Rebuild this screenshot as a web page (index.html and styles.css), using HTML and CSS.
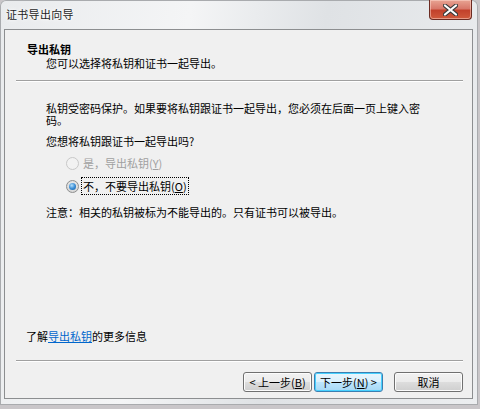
FILE: index.html
```html
<!DOCTYPE html>
<html lang="zh-CN">
<head>
    <meta charset="UTF-8">
    <title>证书导出向导</title>
    <link rel="stylesheet" href="styles.css">
</head>
<body>
    <div class="window">
        <!-- Title bar -->
        <div class="titlebar">
            <span class="title">证书导出向导</span>
            <div class="close-btn">
                <svg width="15" height="12" viewBox="0 0 15 12">
                    <path d="M2 1.5 L13 10.5 M13 1.5 L2 10.5" stroke="#3a3a3a" stroke-width="4.2" stroke-linecap="round"/>
                    <path d="M2 1.5 L13 10.5 M13 1.5 L2 10.5" stroke="#ffffff" stroke-width="2.2" stroke-linecap="round"/>
                </svg>
            </div>
        </div>

        <div class="client">
            <!-- Header -->
            <div class="header">
                <div class="header-title">导出私钥</div>
                <div class="header-sub">您可以选择将私钥和证书一起导出。</div>
            </div>
            <div class="rule"></div>

            <!-- Page body -->
            <div class="content">
                <p class="para">私钥受密码保护。如果要将私钥跟证书一起导出，您必须在后面一页上键入密码。</p>
                <p class="question">您想将私钥跟证书一起导出吗?</p>

                <div class="options">
                    <div class="option disabled">
                        <span class="radio"></span>
                        <span class="option-label">是，导出私钥(<u>Y</u>)</span>
                    </div>
                    <div class="option">
                        <span class="radio checked"></span>
                        <span class="option-label focus">不，不要导出私钥(<u>O</u>)</span>
                    </div>
                </div>

                <p class="note">注意：相关的私钥被标为不能导出的。只有证书可以被导出。</p>
            </div>

            <p class="learn">了解<a href="#" class="link">导出私钥</a>的更多信息</p>
            <div class="rule"></div>

            <!-- Buttons -->
            <div class="buttons">
                <button class="btn">&lt; 上一步(<u>B</u>)</button>
                <button class="btn default">下一步(<u>N</u>) &gt;</button>
                <button class="btn cancel">取消</button>
            </div>
        </div>
    </div>
</body>
</html>
```
FILE: styles.css
```css
* {
    margin: 0;
    padding: 0;
    box-sizing: border-box;
}

body {
    width: 480px;
    height: 409px;
    background-color: #c9c6c9;
    font-family: "Noto Sans CJK SC", "Noto Sans", sans-serif;
    font-size: 11px;
    color: #000000;
    overflow: hidden;
}

/* Window frame */
.window {
    width: 478px;
    height: 405px;
    display: flex;
    flex-direction: column;
    padding: 0 5px 6px 4px;
    border-radius: 6px 6px 0 0;
    background: linear-gradient(100deg, #e9ebed 0%, #f4f5f6 35%, #dfe2e5 60%, #eceef0 100%);
    box-shadow: inset 0 0 0 1px #a9abae;
}

.titlebar {
    height: 29px;
    display: flex;
    justify-content: space-between;
    align-items: flex-start;
}

.title {
    padding: 7px 0 0 2px;
    line-height: 14px;
    letter-spacing: 0.3px;
    color: #1e1e1e;
    text-shadow: 0 0 6px #ffffff, 0 0 3px #ffffff;
}

.close-btn {
    width: 43px;
    height: 20px;
    margin-right: 1px;
    display: flex;
    justify-content: center;
    align-items: center;
    border: 1px solid #6b2b22;
    border-top: none;
    border-radius: 0 0 4px 4px;
    background: linear-gradient(#e8a493 0%, #d8786a 45%, #c2412b 55%, #cf5a3c 100%);
    box-shadow: inset 0 0 0 1px rgba(255, 220, 210, 0.5);
}

/* Client area */
.client {
    flex: 1;
    display: flex;
    flex-direction: column;
    border: 1px solid #8c8e90;
    background-color: #f0f0f0;
}

.header {
    padding: 12px 0 0 22px;
    line-height: 14px;
}

.header-title {
    font-weight: bold;
}

.header-sub {
    padding-left: 19px;
}

.rule {
    margin: 10px 9px 0 11px;
    border-top: 1px solid #a0a0a0;
    border-bottom: 1px solid #ffffff;
}

.content {
    flex: 1;
    padding-left: 41px;
    line-height: 12px;
}

.para {
    width: 390px;
    margin-top: 20px;
}

.question {
    margin-top: 9px;
}

.options {
    margin-top: 7px;
    padding-left: 20px;
    display: flex;
    flex-direction: column;
    gap: 5px;
}

.option {
    height: 18px;
    display: flex;
    align-items: center;
    gap: 2px;
}

.option.disabled {
    color: #a0a0a0;
}

.option-label {
    padding: 2px 1px;
    border: 1px solid transparent;
}

.option-label.focus {
    border: 1px dotted #000000;
}

/* Radio buttons */
.radio {
    width: 13px;
    height: 13px;
    border-radius: 50%;
    border: 1px solid #8e8f8f;
    background: radial-gradient(circle at 50% 40%, #f4f4f4 0%, #d8d8d8 70%, #c8c8c8 100%);
    display: flex;
    justify-content: center;
    align-items: center;
}

.disabled .radio {
    border-color: #c8c8c8;
    background: #f2f2f2;
}

.radio.checked::after {
    content: "";
    width: 7px;
    height: 7px;
    border-radius: 50%;
    background: radial-gradient(circle at 40% 35%, #b6e1fb 0%, #3c8ed6 50%, #0f5a9b 100%);
}

.note {
    margin-top: 11px;
}

.learn {
    padding-left: 21px;
    line-height: 12px;
}

.link {
    color: #0066cc;
    text-decoration: underline;
}

.learn + .rule {
    margin-top: 18px;
}

/* Bottom buttons */
.buttons {
    display: flex;
    justify-content: flex-end;
    margin: 10px 0 6px 0;
    padding-right: 9px;
    gap: 2px;
}

.btn {
    width: 69px;
    height: 20px;
    font-family: inherit;
    font-size: 11px;
    line-height: 16px;
    color: #000000;
    border: 1px solid #707070;
    border-radius: 3px;
    background: linear-gradient(#f2f2f2 0%, #ebebeb 50%, #dddddd 50%, #cfcfcf 100%);
    box-shadow: inset 0 0 0 1px #fcfcfc;
}

.btn u {
    text-decoration: underline;
}

.btn.default {
    border-color: #3c7fb1;
    background: linear-gradient(#eaf6fd 0%, #d9f0fc 50%, #bee6fd 50%, #a7d9f5 100%);
    box-shadow: inset 0 0 0 1px #48d1ff;
}

.btn.cancel {
    margin-left: 9px;
}
```
